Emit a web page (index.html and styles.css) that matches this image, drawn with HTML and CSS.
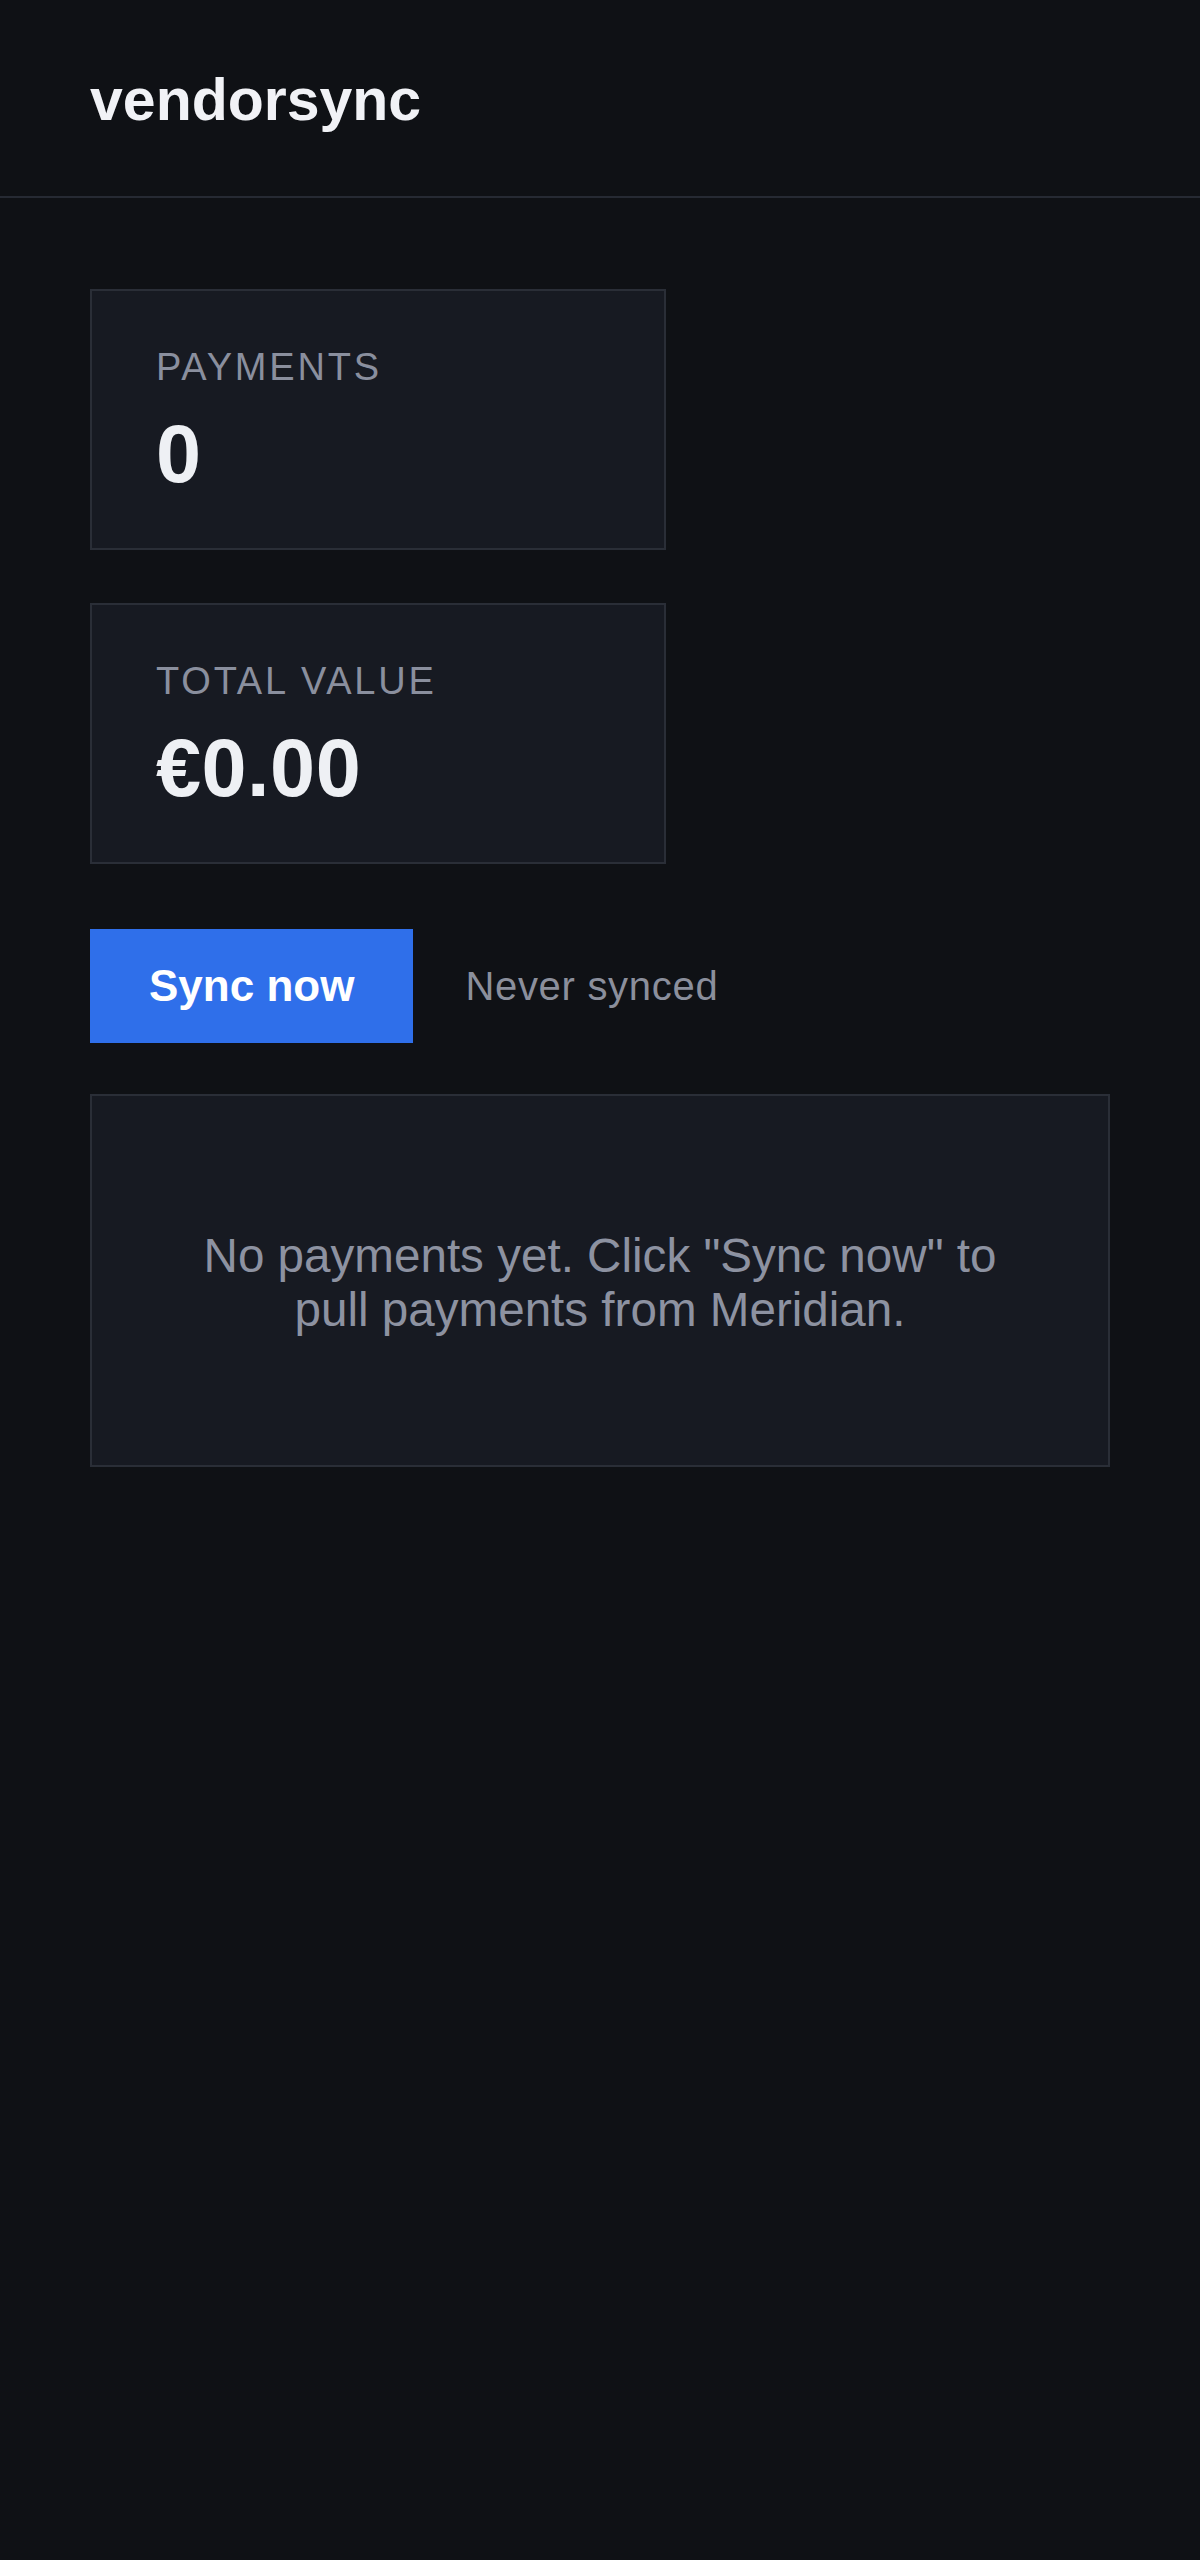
FILE: index.html
```html
<!DOCTYPE html>
<html lang="en">

<head>
    <meta charset="UTF-8">
    <meta name="viewport" content="width=device-width, initial-scale=1.0">
    <title>vendorsync</title>
    <link rel="stylesheet" href="styles.css">
</head>

<body>
    <header class="topbar">
        <div class="brand">vendorsync</div>
    </header>

    <main class="content">
        <div class="stat-card">
            <div class="stat-label">Payments</div>
            <div class="stat-value">0</div>
        </div>

        <div class="stat-card">
            <div class="stat-label">Total value</div>
            <div class="stat-value">€0.00</div>
        </div>

        <div class="sync-row">
            <button class="sync-btn">Sync now</button>
            <span class="sync-status">Never synced</span>
        </div>

        <div class="empty-box">
            <p>No payments yet. Click "Sync now" to pull payments from Meridian.</p>
        </div>
    </main>
</body>

</html>
```

FILE: styles.css
```css
body {
    font-family: "Liberation Sans", Arial, Helvetica, sans-serif;
    background-color: #0f1115;
    color: #eef0f4;
    margin: 0;
    min-height: 100vh;
}

.topbar {
    padding: 66px 90px 62px;
    border-bottom: 2px solid #262a33;
}

.brand {
    font-size: 59px;
    font-weight: bold;
    color: #f1f2f6;
}

.content {
    padding: 91px 90px;
}

.stat-card {
    background-color: #171a22;
    border: 2px solid #2a2e37;
    padding: 55px 0 47px 64px;
    box-sizing: border-box;
    width: 576px;
    margin-bottom: 53px;
}

.stat-label {
    font-size: 38px;
    letter-spacing: 2.8px;
    text-transform: uppercase;
    color: #8a8f9e;
    margin-bottom: 19px;
}

.stat-value {
    font-size: 81px;
    font-weight: bold;
    letter-spacing: 0.5px;
    color: #eef0f4;
}

.sync-row {
    display: flex;
    align-items: center;
    gap: 52px;
    margin-top: 65px;
    margin-bottom: 51px;
}

.sync-btn {
    font-family: inherit;
    font-size: 44px;
    font-weight: bold;
    background-color: #2f6fea;
    color: white;
    padding: 32px 59px;
    border: none;
    cursor: pointer;
}

.sync-status {
    font-size: 40px;
    letter-spacing: 0.7px;
    color: #8b8f9c;
}

.empty-box {
    background-color: #171a22;
    border: 2px solid #2a2e37;
    padding: 133px 60px 128px;
    text-align: center;
}

.empty-box p {
    max-width: 860px;
    margin: 0 auto;
    font-size: 47.6px;
    line-height: 54px;
    color: #8d92a1;
}
```
